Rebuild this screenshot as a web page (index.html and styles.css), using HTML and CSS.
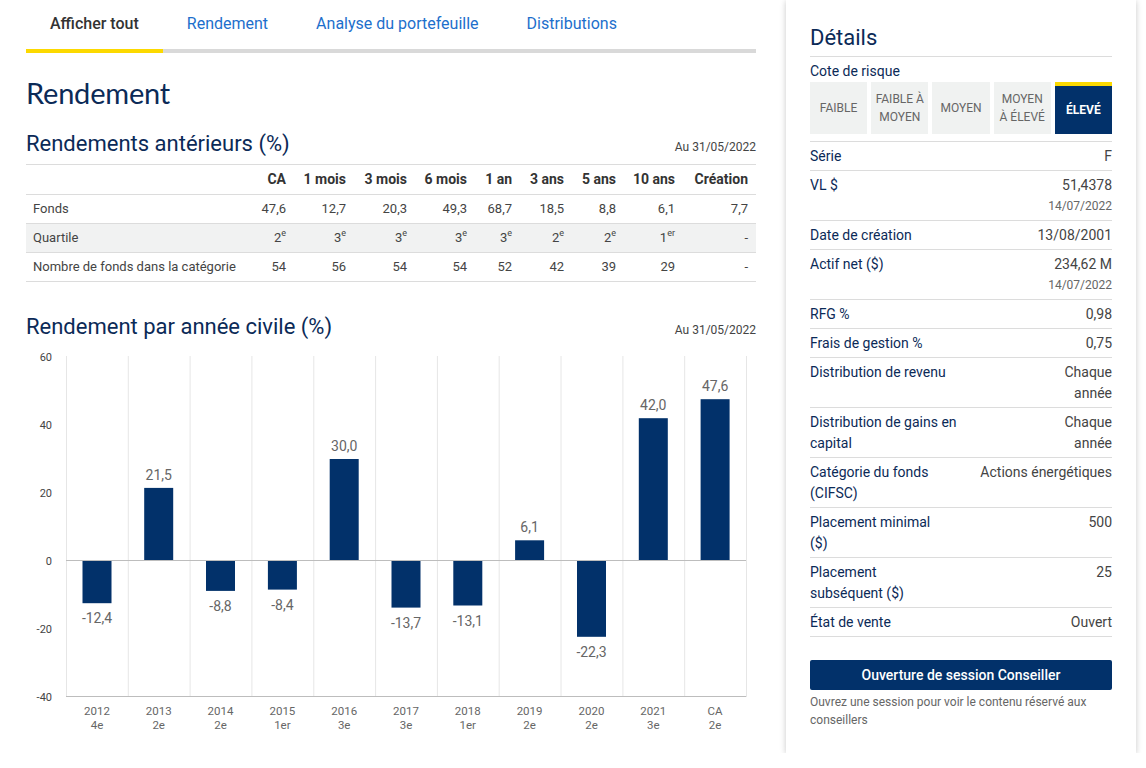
FILE: index.html
```html
<!DOCTYPE html>
<html lang="fr">
<head>
<meta charset="utf-8">
<title>Rendement</title>
<link rel="stylesheet" href="styles.css">
</head>
<body>
<div class="page">
  <main class="main">
    <nav class="tabs">
      <span class="tab active">Afficher tout</span>
      <span class="tab">Rendement</span>
      <span class="tab">Analyse du portefeuille</span>
      <span class="tab">Distributions</span>
    </nav>

    <h1 class="page-title">Rendement</h1>

    <div class="section-head">
      <h2 class="section-title">Rendements antérieurs (%)</h2>
      <span class="asof">Au 31/05/2022</span>
    </div>

    <table class="perf">
      <colgroup>
        <col class="c-label"><col class="c-ca"><col class="c-60"><col class="c-61"><col class="c-60"><col class="c-45"><col class="c-52"><col class="c-52"><col class="c-59"><col class="c-73">
      </colgroup>
      <thead>
        <tr><th></th><th>CA</th><th>1 mois</th><th>3 mois</th><th>6 mois</th><th>1 an</th><th>3 ans</th><th>5 ans</th><th>10 ans</th><th>Création</th></tr>
      </thead>
      <tbody>
        <tr><td>Fonds</td><td>47,6</td><td>12,7</td><td>20,3</td><td>49,3</td><td>68,7</td><td>18,5</td><td>8,8</td><td>6,1</td><td>7,7</td></tr>
        <tr class="shaded"><td>Quartile</td><td>2<sup>e</sup></td><td>3<sup>e</sup></td><td>3<sup>e</sup></td><td>3<sup>e</sup></td><td>3<sup>e</sup></td><td>2<sup>e</sup></td><td>2<sup>e</sup></td><td>1<sup>er</sup></td><td>-</td></tr>
        <tr><td>Nombre de fonds dans la catégorie</td><td>54</td><td>56</td><td>54</td><td>54</td><td>52</td><td>42</td><td>39</td><td>29</td><td>-</td></tr>
      </tbody>
    </table>

    <div class="section-head chart-head">
      <h2 class="section-title">Rendement par année civile (%)</h2>
      <span class="asof">Au 31/05/2022</span>
    </div>

    <svg class="chart" width="730" height="392" viewBox="0 0 730 392" xmlns="http://www.w3.org/2000/svg">
      <g class="grid" stroke="#e6e6e6" stroke-width="1">
        <line x1="40.5" y1="8" x2="40.5" y2="349"/>
        <line x1="102.3" y1="8" x2="102.3" y2="349"/>
        <line x1="164.1" y1="8" x2="164.1" y2="349"/>
        <line x1="225.9" y1="8" x2="225.9" y2="349"/>
        <line x1="287.8" y1="8" x2="287.8" y2="349"/>
        <line x1="349.6" y1="8" x2="349.6" y2="349"/>
        <line x1="411.4" y1="8" x2="411.4" y2="349"/>
        <line x1="473.2" y1="8" x2="473.2" y2="349"/>
        <line x1="535" y1="8" x2="535" y2="349"/>
        <line x1="596.9" y1="8" x2="596.9" y2="349"/>
        <line x1="658.7" y1="8" x2="658.7" y2="349"/>
        <line x1="720.5" y1="8" x2="720.5" y2="349"/>
      </g>
      <g class="ylabels" font-family="Roboto, 'Liberation Sans', sans-serif" font-size="11" fill="#444" text-anchor="end">
        <text x="26" y="13">60</text>
        <text x="26" y="81">40</text>
        <text x="26" y="149">20</text>
        <text x="26" y="217">0</text>
        <text x="26" y="285">-20</text>
        <text x="26" y="353">-40</text>
      </g>
      <g class="bars" fill="#02316a">
        <rect x="56.5" y="213" width="29" height="42.2"/>
        <rect x="118.2" y="139.9" width="29" height="73.1"/>
        <rect x="180" y="213" width="29" height="29.9"/>
        <rect x="241.9" y="213" width="29" height="28.6"/>
        <rect x="303.7" y="111" width="29" height="102"/>
        <rect x="365.5" y="213" width="29" height="46.6"/>
        <rect x="427.3" y="213" width="29" height="44.5"/>
        <rect x="489.1" y="192.3" width="29" height="20.7"/>
        <rect x="551" y="213" width="29" height="75.8"/>
        <rect x="612.8" y="70.2" width="29" height="142.8"/>
        <rect x="674.6" y="51.2" width="29" height="161.8"/>
      </g>
      <line x1="40" y1="212.5" x2="720" y2="212.5" stroke="#bdbdbd" stroke-width="1"/>
      <line x1="40" y1="348.5" x2="720" y2="348.5" stroke="#bdbdbd" stroke-width="1"/>
      <g class="values" font-family="Roboto, 'Liberation Sans', sans-serif" font-size="14" fill="#666" text-anchor="middle">
        <text x="71" y="275">-12,4</text>
        <text x="132.7" y="132">21,5</text>
        <text x="194.5" y="263">-8,8</text>
        <text x="256.4" y="261.5">-8,4</text>
        <text x="318.2" y="103">30,0</text>
        <text x="380" y="279.5">-13,7</text>
        <text x="441.8" y="277.5">-13,1</text>
        <text x="503.6" y="184.3">6,1</text>
        <text x="565.5" y="309">-22,3</text>
        <text x="627.3" y="62.2">42,0</text>
        <text x="689.1" y="43.2">47,6</text>
      </g>
      <g class="xlabels" font-family="Roboto, 'Liberation Sans', sans-serif" font-size="11.5" fill="#666" text-anchor="middle">
        <text x="71" y="367">2012</text><text x="71" y="381">4e</text>
        <text x="132.7" y="367">2013</text><text x="132.7" y="381">2e</text>
        <text x="194.5" y="367">2014</text><text x="194.5" y="381">2e</text>
        <text x="256.4" y="367">2015</text><text x="256.4" y="381">1er</text>
        <text x="318.2" y="367">2016</text><text x="318.2" y="381">3e</text>
        <text x="380" y="367">2017</text><text x="380" y="381">3e</text>
        <text x="441.8" y="367">2018</text><text x="441.8" y="381">1er</text>
        <text x="503.6" y="367">2019</text><text x="503.6" y="381">2e</text>
        <text x="565.5" y="367">2020</text><text x="565.5" y="381">2e</text>
        <text x="627.3" y="367">2021</text><text x="627.3" y="381">3e</text>
        <text x="689.1" y="367">CA</text><text x="689.1" y="381">2e</text>
      </g>
    </svg>
  </main>

  <aside class="card">
    <h3 class="card-title">Détails</h3>
    <div class="risk-label">Cote de risque</div>
    <div class="risk">
      <div class="risk-box">Faible</div>
      <div class="risk-box">Faible à<br>moyen</div>
      <div class="risk-box">Moyen</div>
      <div class="risk-box">Moyen<br>à élevé</div>
      <div class="risk-box active">Élevé</div>
    </div>
    <dl class="details">
      <div class="row"><dt>Série</dt><dd>F</dd></div>
      <div class="row"><dt>VL $</dt><dd>51,4378<span class="sub">14/07/2022</span></dd></div>
      <div class="row"><dt>Date de création</dt><dd>13/08/2001</dd></div>
      <div class="row"><dt>Actif net ($)</dt><dd>234,62 M<span class="sub">14/07/2022</span></dd></div>
      <div class="row"><dt>RFG %</dt><dd>0,98</dd></div>
      <div class="row"><dt>Frais de gestion %</dt><dd>0,75</dd></div>
      <div class="row"><dt>Distribution de revenu</dt><dd>Chaque<br>année</dd></div>
      <div class="row"><dt>Distribution de gains en<br>capital</dt><dd>Chaque<br>année</dd></div>
      <div class="row"><dt>Catégorie du fonds<br>(CIFSC)</dt><dd>Actions énergétiques</dd></div>
      <div class="row"><dt>Placement minimal<br>($)</dt><dd>500</dd></div>
      <div class="row"><dt>Placement<br>subséquent ($)</dt><dd>25</dd></div>
      <div class="row"><dt>État de vente</dt><dd>Ouvert</dd></div>
    </dl>
    <button class="btn" type="button">Ouverture de session Conseiller</button>
    <p class="note">Ouvrez une session pour voir le contenu réservé aux conseillers</p>
  </aside>
</div>
</body>
</html>
```

FILE: styles.css
```css
* { box-sizing: border-box; }

body {
  margin: 0;
  background: #fff;
  color: #333;
  font-family: Roboto, "Liberation Sans", Arial, sans-serif;
}

.page {
  display: flex;
  align-items: flex-start;
  gap: 30px;
  padding-left: 26px;
}

.main {
  width: 730px;
  flex: none;
}

/* Tabs */
.tabs {
  display: flex;
  border-bottom: 4px solid #d9d9d9;
}

.tab {
  padding: 14px 24px 15px;
  font-size: 16px;
  line-height: 20px;
  color: #1d6fcc;
  margin-bottom: -4px;
  border-bottom: 4px solid transparent;
}

.tab.active {
  color: #333;
  font-weight: 500;
  border-bottom-color: #fcd900;
}

/* Headings */
.page-title {
  margin: 22px 0 0;
  font-family: Lato, "Open Sans", sans-serif;
  font-weight: 400;
  font-size: 29px;
  line-height: 36px;
  color: #0b2a57;
  letter-spacing: -0.2px;
}

.section-head {
  display: flex;
  justify-content: space-between;
  align-items: baseline;
  margin-top: 19px;
  margin-bottom: 6px;
}

.section-title {
  margin: 0;
  font-size: 22px;
  font-weight: 400;
  line-height: 28px;
  color: #0b2a57;
}

.asof {
  font-size: 12px;
  color: #444;
}

.chart-head {
  margin-top: 31px;
  margin-bottom: 7px;
}

/* Table */
.perf {
  width: 730px;
  border-collapse: collapse;
  table-layout: fixed;
}

.c-label { width: 228px; }
.c-ca { width: 40px; }
.c-60 { width: 60px; }
.c-61 { width: 61px; }
.c-45 { width: 45px; }
.c-52 { width: 52px; }
.c-59 { width: 59px; }
.c-73 { width: 73px; }

.perf th,
.perf td {
  border-top: 1px solid #dcdcdc;
  border-bottom: 1px solid #dcdcdc;
  text-align: right;
  padding: 4px 8px 4px 0;
  line-height: 20px;
  height: 29px;
  white-space: nowrap;
}

.perf th {
  font-size: 14px;
  font-weight: 700;
  color: #333;
  padding-top: 4px;
  padding-bottom: 5px;
  height: 30px;
}

.perf td {
  font-size: 13px;
  color: #444;
}

.perf td:first-child {
  text-align: left;
  padding-left: 7px;
}

.perf .shaded td {
  background: #f1f2f2;
}

.perf sup {
  font-size: 9px;
  line-height: 1;
  vertical-align: baseline;
  position: relative;
  top: -6px;
}

.chart {
  display: block;
}

/* Card */
.card {
  width: 350px;
  flex: none;
  padding: 24px 24px 24px;
  background: #fff;
  box-shadow: 0 1px 6px rgba(0, 0, 0, 0.22);
}

.card-title {
  margin: 0;
  font-size: 22px;
  font-weight: 400;
  line-height: 27px;
  color: #0b2a57;
  padding-bottom: 5px;
  border-bottom: 1px solid #dcdcdc;
}

.risk-label {
  margin-top: 4px;
  font-size: 14px;
  line-height: 21px;
  color: #0b2a57;
}

.risk {
  display: flex;
  gap: 4px;
  height: 52px;
}

.risk-box {
  flex: 1;
  display: flex;
  align-items: center;
  justify-content: center;
  text-align: center;
  background: #f0f2f1;
  color: #666;
  font-size: 12px;
  line-height: 18px;
  text-transform: uppercase;
}

.risk-box.active {
  background: #02316a;
  color: #fff;
  font-weight: 700;
  border-top: 4px solid #fcd900;
}

.details {
  margin: 7px 0 0;
  border-bottom: 1px solid #dcdcdc;
}

.row {
  display: flex;
  justify-content: space-between;
  border-top: 1px solid #dcdcdc;
  padding: 4px 0 3px;
  font-size: 14px;
  line-height: 21px;
}

.row dt {
  color: #0b2a57;
  white-space: nowrap;
}

.row dd {
  margin: 0;
  color: #444;
  text-align: right;
  white-space: nowrap;
}

.row .sub {
  display: block;
  font-size: 12px;
  line-height: 21px;
  color: #666;
}

.btn {
  display: block;
  width: 100%;
  height: 30px;
  margin-top: 23px;
  border: 0;
  border-radius: 2px;
  background: #02316a;
  color: #fff;
  font-family: Roboto, "Liberation Sans", sans-serif;
  font-size: 14px;
  font-weight: 500;
}

.note {
  margin: 3px 0 0;
  font-size: 12px;
  line-height: 18px;
  color: #666;
}
```
